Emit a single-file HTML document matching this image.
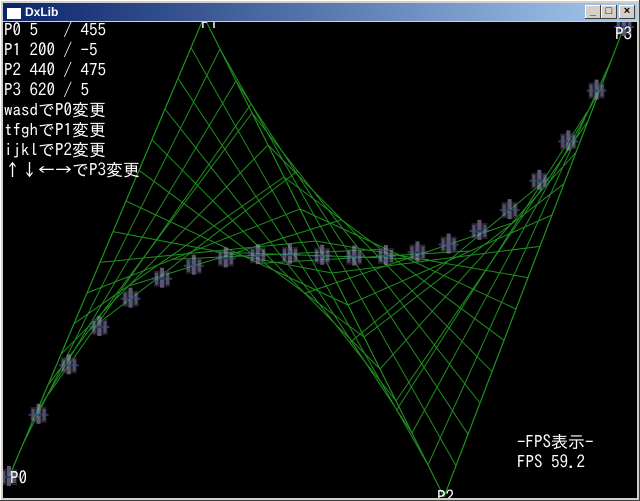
<!DOCTYPE html>
<html><head><meta charset="utf-8"><style>
html,body{margin:0;padding:0;width:640px;height:501px;overflow:hidden;background:#d4d0c8}
#win{position:absolute;left:0;top:0;width:640px;height:501px;background:#d4d0c8;box-shadow:inset -1px -1px #404040,inset 1px 1px #fff}
#title{position:absolute;left:3px;top:3px;width:634px;height:18px;background:linear-gradient(90deg,#0a246a,#a6caf0)}
#title span{position:absolute;left:22px;top:1px;color:#fff;font:bold 12px "Liberation Sans",sans-serif;line-height:16px}
#ico{position:absolute;left:4px;top:3px;width:14px;height:11px;background:#fff;border-top:2px solid #0a246a}
.b{position:absolute;top:5px;width:16px;height:14px;background:#d4d0c8;box-shadow:inset -1px -1px #404040,inset 1px 1px #fff;font:bold 11px "Liberation Sans",sans-serif;text-align:center;line-height:13px;color:#000}
#client{position:absolute;left:3px;top:22px;width:634px;height:476px;background:#000;overflow:hidden}
.t{position:absolute;color:#fff;font:17px "IPAGothic","Liberation Mono",monospace;line-height:20px;white-space:pre}
svg{position:absolute;left:0;top:0}
</style></head><body><div id="win">
<div id="title"><div id="ico"></div><span>DxLib</span></div>
<div class="b" style="left:585px">_</div><div class="b" style="left:601px">□</div><div class="b" style="left:619px">×</div>
<div id="client"><svg id="s" width="634" height="476"></svg>
<div class="t" style="left:1px;top:-1px">P0 5   / 455
P1 200 / -5
P2 440 / 475
P3 620 / 5
wasdでP0変更
tfghでP1変更
ijklでP2変更
↑↓←→でP3変更</div>
<div class="t" style="left:198px;top:-8px">P1</div>
<div class="t" style="left:612px;top:3px">P3</div>
<div class="t" style="left:7px;top:447px">P0</div>
<div class="t" style="left:434px;top:466px">P2</div>
<div class="t" style="left:514px;top:411px">-FPS表示-
FPS 59.2</div>
</div></div>
<script>
var P=[[6,455],[201,-5],[441,475],[621,5]],N=15,h='';
function L(a,b,t){return[a[0]+(b[0]-a[0])*t,a[1]+(b[1]-a[1])*t]}
function ln(a,b){h+='<line x1="'+a[0]+'" y1="'+a[1]+'" x2="'+b[0]+'" y2="'+b[1]+'"/>'}
for(var i=0;i<=N;i++){var t=i/N,a=L(P[0],P[1],t),b=L(P[1],P[2],t),c=L(P[2],P[3],t);ln(a,b);ln(b,c);}
for(var i=0;i<=10;i++){var t=i/10,a=L(P[0],P[1],t),b=L(P[1],P[2],t),c=L(P[2],P[3],t),d=L(a,b,t),e=L(b,c,t);ln(d,e);}
ln(P[0],P[1]);ln(P[2],P[3]);
var g='';
for(var i=0;i<=20;i++){var t=i/20,a=L(P[0],P[1],t),b=L(P[1],P[2],t),c=L(P[2],P[3],t),d=L(a,b,t),e=L(b,c,t),p=L(d,e,t);
g+='<g transform="translate('+p[0]+','+p[1]+')" opacity=".6"><rect x="-8" y="-8" width="16" height="16" fill="#3a3650"/><rect x="-2" y="-11" width="4" height="20" fill="#9a90b8"/><rect x="-10" y="-1" width="20" height="2" fill="#4060c0"/><rect x="-7" y="-6" width="3" height="12" fill="#8a88a0"/><rect x="4" y="-6" width="3" height="12" fill="#8a88a0"/></g>';}
document.getElementById('s').innerHTML='<g stroke="#1f8f1f" stroke-width="1">'+h+'</g>'+g;
</script></body></html>
